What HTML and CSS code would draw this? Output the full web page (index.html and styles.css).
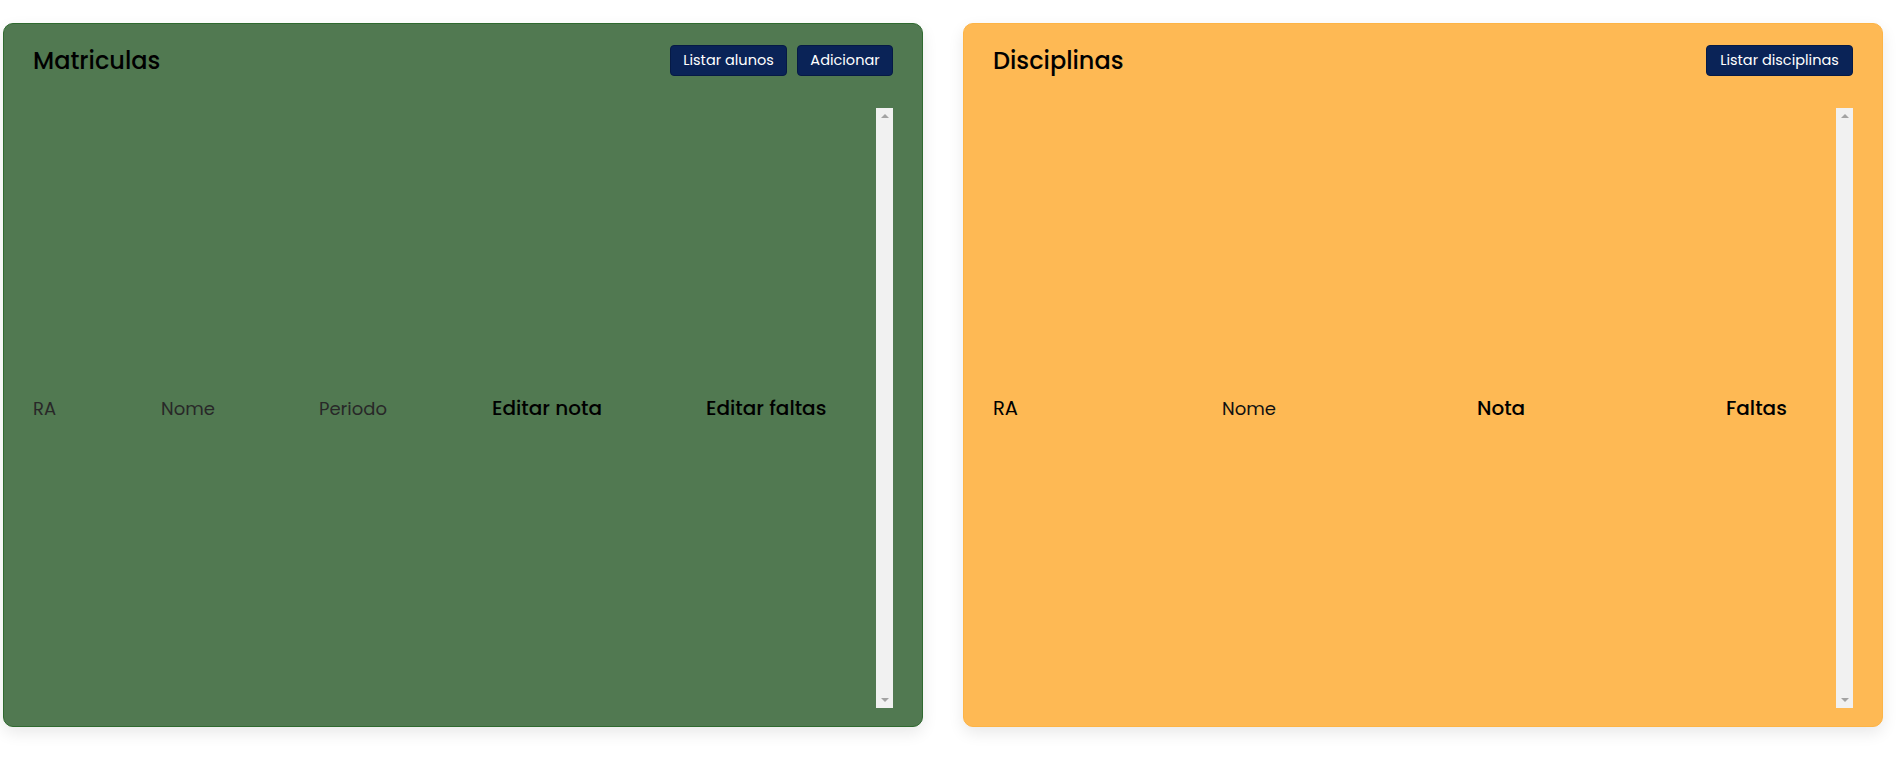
FILE: index.html
```html
<!DOCTYPE html>
<html lang="pt">
<head>
<meta charset="utf-8">
<title>Painel</title>
<link rel="stylesheet" href="styles.css">
</head>
<body>
<main class="page">
  <section class="card card-green">
    <header class="card-head">
      <h2 class="card-title">Matriculas</h2>
      <div class="actions">
        <button class="btn btn-alunos">Listar alunos</button>
        <button class="btn btn-add">Adicionar</button>
      </div>
    </header>
    <div class="scroll-area">
      <table class="grid grid-mat">
        <colgroup>
          <col class="c-ra"><col class="c-nome"><col class="c-periodo"><col class="c-nota"><col>
        </colgroup>
        <tr>
          <th class="h-small h-gray">RA</th>
          <th class="h-small h-gray">Nome</th>
          <th class="h-small h-gray">Periodo</th>
          <td class="h-big">Editar nota</td>
          <td class="h-big">Editar faltas</td>
        </tr>
      </table>
      <div class="fake-scroll"><span class="arrow up"></span><span class="arrow down"></span></div>
    </div>
  </section>
  <section class="card card-orange">
    <header class="card-head">
      <h2 class="card-title">Disciplinas</h2>
      <div class="actions">
        <button class="btn btn-disc">Listar disciplinas</button>
      </div>
    </header>
    <div class="scroll-area">
      <table class="grid grid-disc">
        <colgroup>
          <col class="d-ra"><col class="d-nome"><col class="d-nota"><col>
        </colgroup>
        <tr>
          <th class="h-mid">RA</th>
          <th class="h-small h-dark">Nome</th>
          <td class="h-big">Nota</td>
          <td class="h-big">Faltas</td>
        </tr>
      </table>
      <div class="fake-scroll"><span class="arrow up"></span><span class="arrow down"></span></div>
    </div>
  </section>
</main>
</body>
</html>
```

FILE: styles.css
```css
* { box-sizing: border-box; }
html, body { margin: 0; padding: 0; background: #ffffff; }
body {
  font-family: "Poppins", Inter, "Open Sans", "Liberation Sans", sans-serif;
  width: 1900px;
  height: 780px;
  overflow: hidden;
}
.page {
  display: flex;
  gap: 40px;
  padding: 23px 17px 0 3px;
}
.card {
  width: 920px;
  height: 704px;
  border-radius: 10px;
  padding: 21px 29px 18px;
  display: flex;
  flex-direction: column;
  box-shadow: 0 6px 16px rgba(0, 0, 0, 0.09);
}
.card-green { background: #517951; border: 1px solid #2f6a2f; }
.card-orange { background: #feb954; border: 1px solid #fdb446; }
.card-head {
  display: flex;
  align-items: center;
  justify-content: space-between;
  height: 31px;
  margin-bottom: 32px;
}
.card-title {
  margin: 0;
  font-size: 24px;
  font-weight: 500;
  color: #000;
}
.actions { display: flex; gap: 10px; }
.btn {
  font-family: inherit;
  height: 31px;
  padding: 0 6px;
  background: #0a2357;
  color: #fff;
  border: 1px solid #061a45;
  border-radius: 4px;
  font-size: 14.5px;
  font-weight: 400;
}
.btn-alunos { width: 117px; }
.btn-add { width: 96px; }
.btn-disc { width: 147px; }
.scroll-area {
  flex: 1;
  display: flex;
  min-height: 0;
}
.grid {
  flex: 1;
  height: 100%;
  border-collapse: collapse;
  table-layout: fixed;
}
.grid th, .grid td {
  padding: 0;
  text-align: left;
  vertical-align: middle;
  white-space: nowrap;
}
.c-ra { width: 128px; }
.c-nome { width: 158px; }
.c-periodo { width: 173px; }
.c-nota { width: 214px; }
.d-ra { width: 229px; }
.d-nome { width: 255px; }
.d-nota { width: 249px; }
.h-small { font-size: 18px; font-weight: 400; }
.h-gray { color: #282828; }
.h-dark { color: #111; }
.h-mid { font-size: 19.5px; font-weight: 400; color: #000; }
.h-big { font-size: 20px; font-weight: 500; color: #000; }
.fake-scroll {
  width: 17px;
  height: 100%;
  background: #f1f1f1;
  display: flex;
  flex-direction: column;
  justify-content: space-between;
  align-items: center;
  padding: 6px 0;
}
.arrow {
  width: 0;
  height: 0;
  border-left: 4px solid transparent;
  border-right: 4px solid transparent;
}
.arrow.up { border-bottom: 4px solid #a3a3a3; }
.arrow.down { border-top: 4px solid #a3a3a3; }
```
